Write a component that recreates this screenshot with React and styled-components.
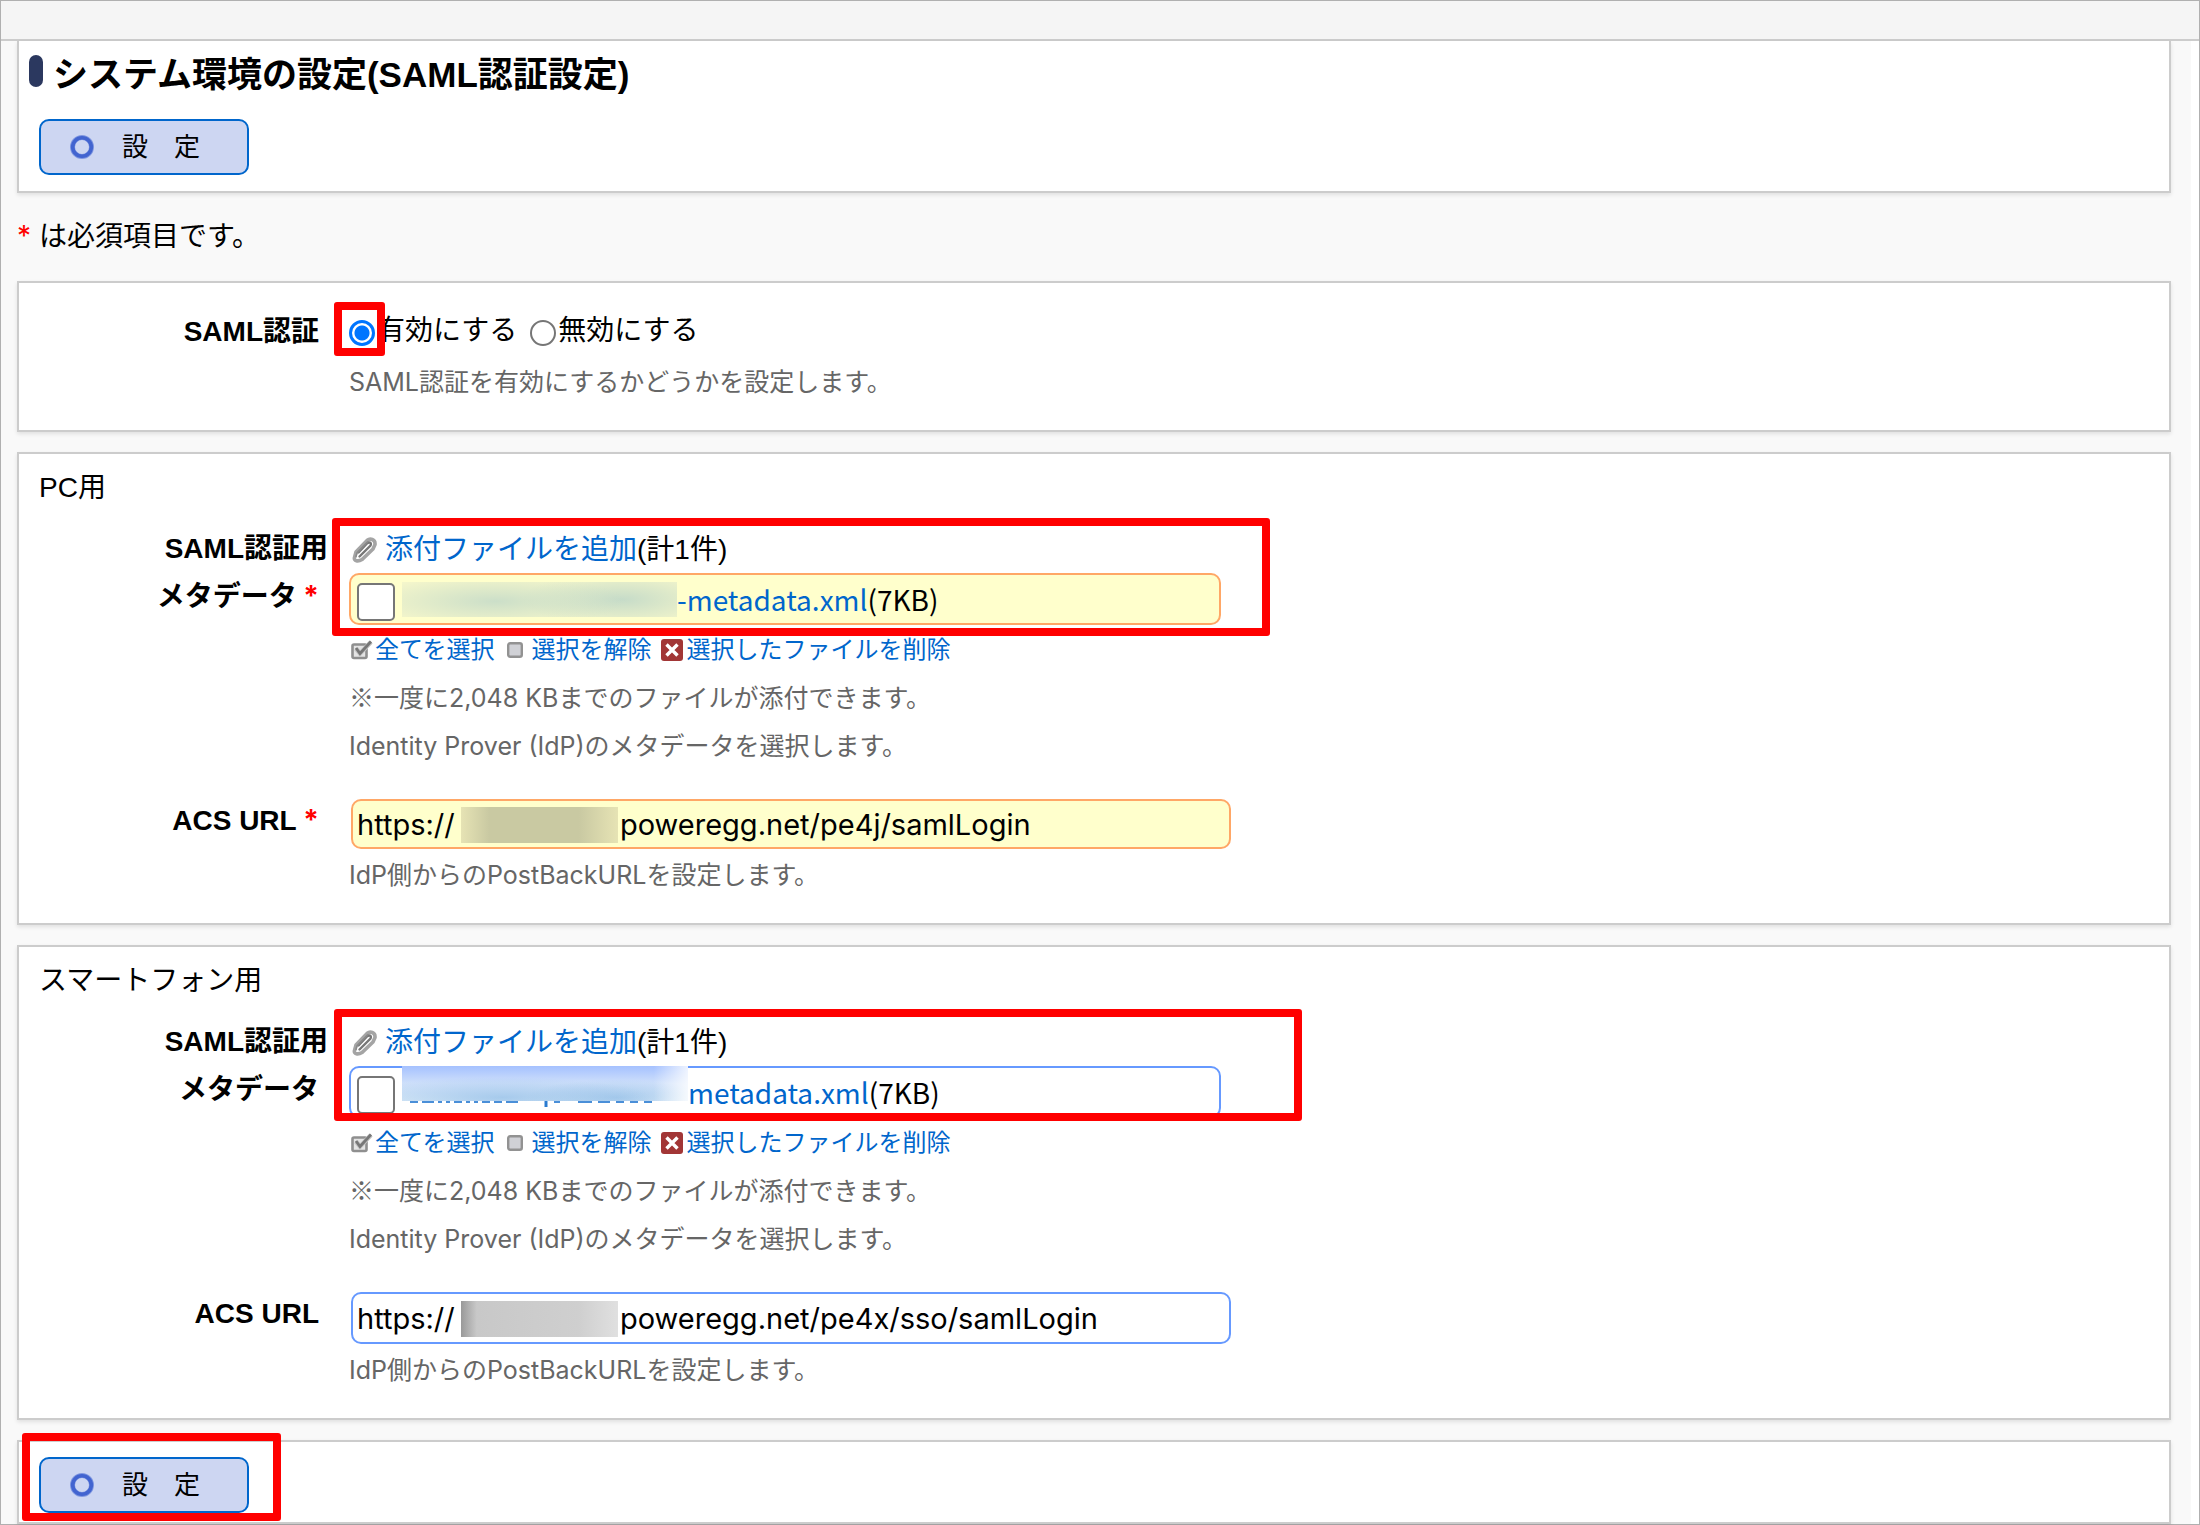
import React from "react";
import styled, { createGlobalStyle, css } from "styled-components";

const GlobalStyle = createGlobalStyle`
  *, *::before, *::after { box-sizing: border-box; }
  body {
    margin: 0;
    background: #fff;
    color: #000;
    font: 28px/48px "Liberation Sans", "Noto Sans CJK JP", sans-serif;
  }
`;

const Page = styled.div`
  display: flex;
  flex-direction: column;
  min-height: 100vh;
  border: 1px solid #b0b0b0;
`;
const TopBar = styled.header`
  height: 40px;
  background: #f5f5f5;
  border-bottom: 2px solid #ccc;
`;
const Body = styled.div`
  flex: 1;
  display: flex;
  padding-right: 8px;
`;
const Main = styled.main`
  flex: 1;
  display: flex;
  flex-direction: column;
  gap: 20px;
  padding: 0 20px 0 16px;
  background: #f9f9f9;
`;
const Card = styled.section`
  border: 2px solid #ccc;
  background: #fff;
  box-shadow: 0 2px 4px rgba(0, 0, 0, 0.1);
  padding: 24px 0;
`;
const TitleCard = styled(Card)`
  border-top: 0;
  padding: 10px 10px 16px;
`;
const GroupCard = styled(Card)`
  padding-top: 10px;
`;
const FooterCard = styled(Card)`
  padding: 15px 10px 9px;
`;
const TitleRow = styled.div`
  display: flex;
  align-items: flex-start;
  gap: 10px;
  margin-bottom: 20px;
`;
const Marker = styled.span`
  width: 14px;
  height: 32px;
  margin-top: 4px;
  border-radius: 7px;
  background: #2b385f;
`;
const Title = styled.h1`
  margin: 0;
  font-size: 35px;
  line-height: 48px;
  font-weight: 700;
`;
const ButtonWrap = styled.div`
  position: relative;
  display: flex;
  padding-left: 10px;
`;
const SubmitButton = styled.button`
  display: flex;
  align-items: center;
  gap: 28px;
  width: 210px;
  height: 56px;
  padding: 0 0 0 29px;
  border: 2px solid #06c;
  border-radius: 10px;
  background: #cdd6f2;
  color: #000;
  font: inherit;
  font-size: 26px;
`;
const RequiredNote = styled.p`
  margin: 0;
`;
const Star = styled.span`
  color: #f00;
  font-family: Inter, sans-serif;
  line-height: 1;
`;
const GroupTitle = styled.h2`
  margin: 0 0 12px 20px;
  font-size: 28px;
  font-weight: 400;
`;
const Rows = styled.div`
  display: flex;
  flex-direction: column;
  gap: 26px;
`;
const Row = styled.div`
  display: grid;
  grid-template-columns: 309px 1fr;
  column-gap: 21px;
`;
const RowLabel = styled.div`
  padding-top: 1px;
  font-weight: 700;
  text-align: right;
`;
const LabelLine = styled.div`
  padding-right: ${(p) => (p.$flush ? 0 : 9)}px;
`;
const FieldLabel = styled.label`
  display: block;
  padding-right: 9px;
`;
const RadioLine = styled.div`
  display: flex;
  gap: 13px;
  margin-bottom: 3px;
`;
const Choice = styled.label`
  position: relative;
  display: flex;
  align-items: center;
  gap: 2px;
`;
const Radio = styled.input`
  appearance: none;
  width: 26px;
  height: 26px;
  margin: 4px 0 0;
  border: 2px solid #767676;
  border-radius: 50%;
  background: #fff;
  &:checked {
    border: 3px solid #0075ff;
    background: radial-gradient(circle, #0075ff 7px, #fff 8px);
  }
`;
const Help = styled.p`
  margin: 0;
  color: #666;
  font-family: Inter, "Noto Sans CJK JP", sans-serif;
  font-size: 25px;
`;
const NoteMark = styled.span`
  font-family: "Noto Sans CJK JP", sans-serif;
  line-height: 1;
`;
const Attachment = styled.div`
  position: relative;
`;
const Line = styled.div`
  display: flex;
  align-items: center;
`;
const AddLine = styled(Line)`
  height: 49px;
  padding: 2px 0 0 3px;
`;
const Link = styled.a`
  color: #06c;
  text-decoration: none;
`;
const AddLink = styled(Link)`
  margin-left: 7px;
`;
const boxTone = css`
  border: 2px solid ${(p) => (p.$required ? "#ffa766" : "#6699ff")};
  border-radius: 10px;
  background: ${(p) => (p.$required ? "#ffffcc" : "#fff")};
`;
const FileBox = styled.div`
  ${boxTone}
  display: flex;
  align-items: center;
  width: 872px;
  max-width: 100%;
  height: 52px;
  margin-bottom: 1px;
  padding-left: 6px;
  font-family: "Noto Sans CJK JP", sans-serif;
`;
const FileCheck = styled.input`
  appearance: none;
  width: 38px;
  height: 38px;
  margin: 5px 7px 0 0;
  border: 2px solid #767676;
  border-radius: 5px;
  background: #fff;
`;
const FileMask = styled.span`
  position: relative;
  width: ${(p) => p.$width}px;
  height: 35px;
  background: ${(p) =>
    p.$required
      ? `radial-gradient(ellipse 130px 26px at 34% 55%, rgba(190,215,200,.75), transparent),
         radial-gradient(ellipse 100px 28px at 80% 50%, rgba(190,215,200,.85), transparent), #f4f6cb`
      : `linear-gradient(to right, #fff0 88%, #fffc),
         radial-gradient(ellipse 150px 20px at 35% 90%, #8dbbe6aa, transparent),
         radial-gradient(ellipse 90px 18px at 75% 90%, #8dbbe6aa, transparent),
         linear-gradient(#a5c1ff, #cfe0fa 50%, #dcebf8)`};
  align-self: ${(p) => (p.$required ? "center" : "flex-start")};
  margin-top: ${(p) => (p.$required ? 0 : -2)}px;
`;
const MaskTail = styled.svg`
  position: absolute;
  left: 6px;
  top: 35px;
  width: 270px;
  height: 6px;
`;
const ToolLine = styled(Line)`
  font-size: 24px;
  padding-left: 2px;
`;
const ToolLink = styled(Link)`
  margin: 0 ${(p) => p.$after}px 0 ${(p) => p.$before}px;
`;
const UrlBox = styled.div`
  ${boxTone}
  display: flex;
  align-items: center;
  width: 880px;
  max-width: 100%;
  height: ${(p) => (p.$required ? 50 : 52)}px;
  margin: 3px 2px 2px;
  padding: 2px 4px 0;
  font-family: Inter, sans-serif;
  font-size: 29px;
`;
const UrlPrefix = styled.span`
  min-width: 104px;
`;
const UrlMask = styled.span`
  width: 157px;
  height: 36px;
  margin-right: 2px;
  background: ${(p) =>
    p.$required
      ? "linear-gradient(to right, #e6e3b4, #c9c9a2 18%, #c9c9a2 75%, #e6e3b4)"
      : "linear-gradient(to right, #999, #c8c8c8 10%, #cfcfcf 75%, #e0e0e0)"};
`;
const UrlInput = styled.input`
  flex: 1;
  min-width: 0;
  padding: 0;
  border: 0;
  outline: 0;
  background: transparent;
  color: #000;
  font: inherit;
`;
const Highlight = styled.div`
  position: absolute;
  pointer-events: none;
  z-index: 1;
  left: ${(p) => p.$left}px;
  top: ${(p) => p.$top}px;
  width: ${(p) => p.$width}px;
  height: ${(p) => p.$height}px;
  border: 8px solid #f00;
  border-radius: 3px;
`;

const RingIcon = () => (
  <svg width="24" height="24" viewBox="0 0 24 24" aria-hidden="true">
    <circle cx="12" cy="12" r="9.5" fill="none" stroke="#7f97e0" strokeWidth="5" />
    <circle cx="12" cy="12" r="9.3" fill="none" stroke="#4264d0" strokeWidth="3.6" />
  </svg>
);
const ClipIcon = () => (
  <svg width="26" height="26" viewBox="0 0 26 26" aria-hidden="true" fill="none" strokeLinecap="round">
    <path d="M2.5 20.5 L4 15 L15 3.5 C18 1 23.5 2 23 7.5 L21 12 L10 22.5 C6 25 1.5 24 2.5 20.5 Z" stroke="#a4a4a4" strokeWidth="3.6" />
    <path d="M7.5 19.5 L18.5 8.5 C20 5.5 17 4.5 15 6.5 L6.5 15.5" stroke="#777" strokeWidth="2.4" />
    <path d="M4 19.5 L5 16 L15.5 5" stroke="#8a8a8a" strokeWidth="1.6" />
  </svg>
);
const CheckIcon = () => (
  <svg width="22" height="20" viewBox="0 0 22 20" aria-hidden="true" fill="none">
    <rect x="1.5" y="4.5" width="14" height="13.5" rx="1.5" fill="#e4e4e4" stroke="#8f8f8f" strokeWidth="2.6" />
    <path d="M5 8.5 L9 13.5 L20 2" stroke="#c4c4c4" strokeWidth="4.5" />
    <path d="M5 8 L9 13.5 L20 1.5" stroke="#777" strokeWidth="2.8" />
  </svg>
);
const SquareIcon = () => (
  <svg width="16" height="18" viewBox="0 0 16 18" aria-hidden="true">
    <rect x="1.2" y="2.2" width="13.6" height="13.6" rx="2" fill="#d0d1d6" stroke="#929292" strokeWidth="2.4" />
  </svg>
);
const DeleteIcon = () => (
  <svg width="22" height="22" viewBox="0 0 22 22" aria-hidden="true">
    <rect width="22" height="22" rx="3" fill="#a23636" />
    <path d="M5.5 5.5 L16.5 16.5 M16.5 5.5 L5.5 16.5" stroke="#fff" strokeWidth="3.4" />
  </svg>
);

function ConfirmButton({ children }) {
  return (
    <ButtonWrap>
      <SubmitButton type="button">
        <RingIcon />
        設　定
      </SubmitButton>
      {children}
    </ButtonWrap>
  );
}

function MetadataRow({ id, required, fileName, maskWidth, highlight }) {
  return (
    <Row>
      <RowLabel>
        <LabelLine $flush>SAML認証用</LabelLine>
        <LabelLine>
          メタデータ{required && <Star> *</Star>}
        </LabelLine>
      </RowLabel>
      <Attachment>
        <AddLine>
          <ClipIcon />
          <AddLink href="#add">添付ファイルを追加</AddLink>
          (計1件)
        </AddLine>
        <FileBox $required={required}>
          <FileCheck type="checkbox" id={id} aria-label={fileName} />
          <FileMask $required={required} $width={maskWidth}>
            {!required && (
              <MaskTail viewBox="0 0 270 6" aria-hidden="true">
                <path
                  d="M2 1h8M14 1h12M30 1h4M38 1h4M46 1h8M58 1h4M66 1h4M74 1h8M86 1h8M98 1h12M146 1h6M170 1h14M190 1h12M208 1h8M222 1h8M236 1h8"
                  stroke="#4a8fd8"
                  strokeWidth="2"
                />
                <path d="M138 0v6" stroke="#2a7bd0" strokeWidth="3" />
              </MaskTail>
            )}
          </FileMask>
          <Link href="#file">{fileName}</Link>
          (7KB)
        </FileBox>
        <ToolLine>
          <CheckIcon />
          <ToolLink href="#all" $before={2} $after={12}>全てを選択</ToolLink>
          <SquareIcon />
          <ToolLink href="#none" $before={9} $after={9}>選択を解除</ToolLink>
          <DeleteIcon />
          <ToolLink href="#delete" $before={4} $after={0}>選択したファイルを削除</ToolLink>
        </ToolLine>
        <Help>
          <NoteMark>※</NoteMark>一度に2,048 KBまでのファイルが添付できます。
        </Help>
        <Help>Identity Prover (IdP)のメタデータを選択します。</Help>
        <Highlight {...highlight} />
      </Attachment>
    </Row>
  );
}

function UrlRow({ id, required, value }) {
  return (
    <Row>
      <RowLabel>
        <FieldLabel htmlFor={id}>
          ACS URL{required && <Star> *</Star>}
        </FieldLabel>
      </RowLabel>
      <div>
        <UrlBox $required={required}>
          <UrlPrefix>https://</UrlPrefix>
          <UrlMask $required={required} />
          <UrlInput id={id} type="text" defaultValue={value} />
        </UrlBox>
        <Help>IdP側からのPostBackURLを設定します。</Help>
      </div>
    </Row>
  );
}

export default function App() {
  return (
    <Page>
      <GlobalStyle />
      <TopBar />
      <Body>
        <Main>
          <TitleCard>
            <TitleRow>
              <Marker />
              <Title>システム環境の設定(SAML認証設定)</Title>
            </TitleRow>
            <ConfirmButton />
          </TitleCard>

          <RequiredNote>
            <Star>* </Star>は必須項目です。
          </RequiredNote>

          <Card>
            <Row>
              <RowLabel>
                <LabelLine>SAML認証</LabelLine>
              </RowLabel>
              <div>
                <RadioLine role="radiogroup" aria-label="SAML認証">
                  <Choice>
                    <Radio type="radio" name="saml" defaultChecked />
                    有効にする
                    <Highlight $left={-15} $top={-5} $width={51} $height={54} />
                  </Choice>
                  <Choice>
                    <Radio type="radio" name="saml" />
                    無効にする
                  </Choice>
                </RadioLine>
                <Help>SAML認証を有効にするかどうかを設定します。</Help>
              </div>
            </Row>
          </Card>

          <GroupCard>
            <GroupTitle>PC用</GroupTitle>
            <Rows>
              <MetadataRow
                id="pc-file"
                required
                fileName="-metadata.xml"
                maskWidth={275}
                highlight={{ $left: -17, $top: -6, $width: 938, $height: 118 }}
              />
              <UrlRow id="pc-url" required value="poweregg.net/pe4j/samlLogin" />
            </Rows>
          </GroupCard>

          <GroupCard>
            <GroupTitle>スマートフォン用</GroupTitle>
            <Rows>
              <MetadataRow
                id="sp-file"
                fileName="metadata.xml"
                maskWidth={286}
                highlight={{ $left: -15, $top: -8, $width: 968, $height: 112 }}
              />
              <UrlRow id="sp-url" value="poweregg.net/pe4x/sso/samlLogin" />
            </Rows>
          </GroupCard>

          <FooterCard>
            <ConfirmButton>
              <Highlight $left={-7} $top={-24} $width={259} $height={88} />
            </ConfirmButton>
          </FooterCard>
        </Main>
      </Body>
    </Page>
  );
}
